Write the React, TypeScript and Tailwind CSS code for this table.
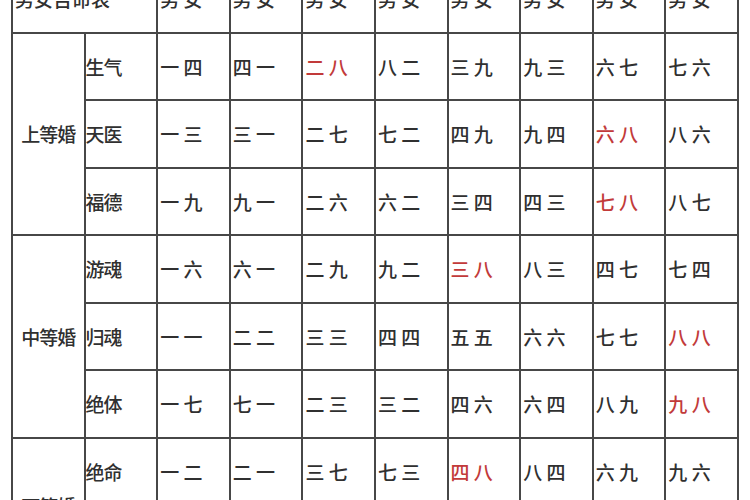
import React from 'react';

type Row = { name: string; values: string[]; red: number };

const groups: { label: string; rows: Row[] }[] = [
  {
    label: '上等婚',
    rows: [
      { name: '生气', values: ['一 四', '四 一', '二 八', '八 二', '三 九', '九 三', '六 七', '七 六'], red: 2 },
      { name: '天医', values: ['一 三', '三 一', '二 七', '七 二', '四 九', '九 四', '六 八', '八 六'], red: 6 },
      { name: '福德', values: ['一 九', '九 一', '二 六', '六 二', '三 四', '四 三', '七 八', '八 七'], red: 6 },
    ],
  },
  {
    label: '中等婚',
    rows: [
      { name: '游魂', values: ['一 六', '六 一', '二 九', '九 二', '三 八', '八 三', '四 七', '七 四'], red: 4 },
      { name: '归魂', values: ['一 一', '二 二', '三 三', '四 四', '五 五', '六 六', '七 七', '八 八'], red: 7 },
      { name: '绝体', values: ['一 七', '七 一', '二 三', '三 二', '四 六', '六 四', '八 九', '九 八'], red: 7 },
    ],
  },
  {
    label: '下等婚',
    rows: [
      { name: '绝命', values: ['一 二', '二 一', '三 七', '七 三', '四 八', '八 四', '六 九', '九 六'], red: 4 },
      { name: '祸害', values: ['一 八', '八 一', '二 四', '四 二', '三 六', '六 三', '七 九', '九 七'], red: -1 },
    ],
  },
];

// shared cell frame; alignment is added per cell
const cell = 'border-2 border-[#474747] h-[67.5px] align-middle';

export default function App() {
  return (
    <div className="w-[750px] h-[500px] overflow-hidden bg-white pl-[11px] text-[#303030] text-[19px] font-medium leading-none font-['Noto_Sans_CJK_SC','Noto_Sans',sans-serif]">
      <table className="mt-[-36px] table-fixed border-collapse w-[726px]">
        <colgroup>
          {Array.from({ length: 10 }).map((_, i) => (
            <col key={i} className="w-[72.6px]" />
          ))}
        </colgroup>
        <tbody>
          <tr>
            <td colSpan={2} className={`${cell} px-[2px] text-left`}>男女吉命表</td>
            {Array.from({ length: 8 }).map((_, i) => (
              <td key={i} className={`${cell} px-[2px] text-left`}>男 女</td>
            ))}
          </tr>
          {groups.map((g) =>
            g.rows.map((r, ri) => (
              <tr key={r.name}>
                {ri === 0 && (
                  <td rowSpan={g.rows.length} className={`${cell} px-0 text-center tracking-[-1px]`}>
                    {g.label}
                  </td>
                )}
                <td className={`${cell} px-0 text-left tracking-[-1px]`}>{r.name}</td>
                {r.values.map((v, vi) => (
                  <td
                    key={vi}
                    className={`${cell} px-[2px] text-left ${vi === r.red ? 'text-[#c23a3a]' : ''}`}
                  >
                    {v}
                  </td>
                ))}
              </tr>
            ))
          )}
        </tbody>
      </table>
    </div>
  );
}
